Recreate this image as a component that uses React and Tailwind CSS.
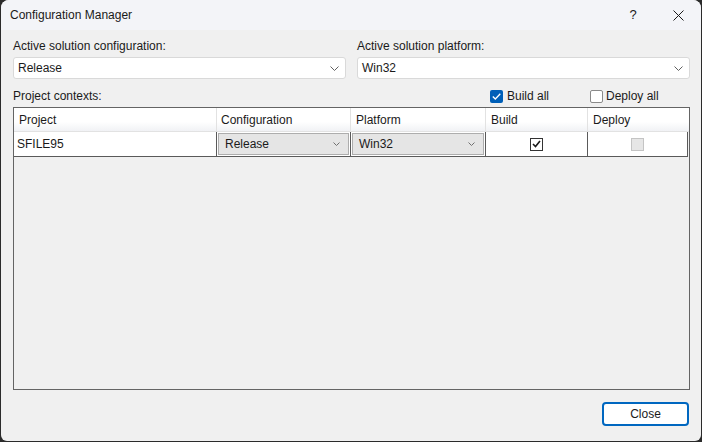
import React from "react";

const Chevron = ({ className = "" }) => (
  <svg width="9" height="5" viewBox="0 0 9 5" className={className} fill="none">
    <path d="M0.5 0.5 L4.5 4.5 L8.5 0.5" stroke="#606060" strokeWidth="1" />
  </svg>
);

const SmallChevron = () => (
  <svg width="7" height="4" viewBox="0 0 7 4" fill="none">
    <path d="M0.5 0.5 L3.5 3.5 L6.5 0.5" stroke="#707070" strokeWidth="1" />
  </svg>
);

function Combo({ value }) {
  return (
    <div className="h-[22px] bg-white border border-[#d9d9d9] rounded-[3px] flex items-center justify-between pl-[4px] pr-[6px]">
      <span>{value}</span>
      <Chevron />
    </div>
  );
}

function CellCombo({ value }) {
  return (
    <div className="h-[22px] mx-px bg-[#e5e5e5] border border-[#adadad] flex items-center justify-between pl-[6px] pr-[8px]">
      <span>{value}</span>
      <SmallChevron />
    </div>
  );
}

export default function App() {
  return (
    <div
      className="w-[702px] h-[442px] bg-[#2b2b2b] px-px pb-px text-[12px] text-[#1a1a1a]"
      style={{ fontFamily: '"Liberation Sans", Arial, sans-serif' }}
    >
      <div className="h-full bg-[#f0f0f0] rounded-t-[8px] rounded-b-[6px] flex flex-col overflow-hidden">
        {/* title bar */}
        <div className="h-[30px] bg-[#f3f4f8] flex items-center pl-[9px] shrink-0">
          <span className="flex-1">Configuration Manager</span>
          <span className="w-[14px] text-center mr-[33px] text-[13px]">?</span>
          <svg width="11" height="11" viewBox="0 0 11 11" className="mr-[17px]">
            <path d="M0.5 0.5 L10.5 10.5 M10.5 0.5 L0.5 10.5" stroke="#1a1a1a" strokeWidth="1" />
          </svg>
        </div>

        <div className="flex-1 flex flex-col pl-[12px] pr-[11px] pt-[8px] pb-[15px]">
          {/* solution config/platform */}
          <div className="grid grid-cols-2 gap-x-[11px]">
            <div className="flex flex-col gap-[3px]">
              <span className="leading-[16px]">Active solution configuration:</span>
              <Combo value="Release" />
            </div>
            <div className="flex flex-col gap-[3px]">
              <span className="leading-[16px]">Active solution platform:</span>
              <Combo value="Win32" />
            </div>
          </div>

          {/* project contexts row */}
          <div className="h-[28px] flex items-end pb-[3px]">
            <span className="flex-1 leading-[16px]">Project contexts:</span>
            <div className="flex items-center gap-[4px] w-[100px]">
              <div className="w-[13px] h-[13px] bg-[#005fb8] rounded-[2px] flex items-center justify-center">
                <svg width="9" height="7" viewBox="0 0 9 7" fill="none">
                  <path d="M0.8 3.5 L3.3 6 L8.3 0.8" stroke="white" strokeWidth="1.3" />
                </svg>
              </div>
              <span className="leading-[16px]">Build all</span>
            </div>
            <div className="flex items-center gap-[3px] w-[100px]">
              <div className="w-[13px] h-[13px] bg-white border border-[#8a8a8a] rounded-[2px]" />
              <span className="leading-[16px]">Deploy all</span>
            </div>
          </div>

          {/* grid */}
          <div className="h-[283px] border border-[#646464] bg-[#f0f0f0] flex flex-col">
            <div className="h-[24px] flex border-b border-[#e2e2e2] bg-gradient-to-b from-white from-60% to-[#f1f2f5]">
              <div className="w-[203px] border-r border-[#e2e2e2] flex items-center pl-[5px] pt-px">Project</div>
              <div className="w-[134px] border-r border-[#e2e2e2] flex items-center pl-[4px] pt-px">Configuration</div>
              <div className="w-[135px] border-r border-[#e2e2e2] flex items-center pl-[5px] pt-px">Platform</div>
              <div className="w-[102px] border-r border-[#e2e2e2] flex items-center pl-[5px] pt-px">Build</div>
              <div className="flex-1 flex items-center pl-[5px] pt-px">Deploy</div>
            </div>
            <div className="h-[25px] w-[674px] flex bg-white border-b border-r border-[#5a5a5a]">
              <div className="w-[203px] border-r border-[#5a5a5a] flex items-center pl-[3px]">SFILE95</div>
              <div className="w-[134px] border-r border-[#5a5a5a] flex items-center">
                <div className="flex-1"><CellCombo value="Release" /></div>
              </div>
              <div className="w-[135px] border-r border-[#5a5a5a] flex items-center">
                <div className="flex-1"><CellCombo value="Win32" /></div>
              </div>
              <div className="w-[102px] border-r border-[#5a5a5a] flex items-center justify-center">
                <div className="w-[13px] h-[13px] border border-[#333333] bg-white flex items-center justify-center">
                  <svg width="9" height="8" viewBox="0 0 9 8" fill="none">
                    <path d="M1 4 L3.5 6.5 L8 1" stroke="#1a1a1a" strokeWidth="1.6" />
                  </svg>
                </div>
              </div>
              <div className="flex-1 flex items-center justify-center">
                <div className="w-[13px] h-[13px] border border-[#c4c4c4] bg-[#e6e6e6]" />
              </div>
            </div>
          </div>

          {/* footer */}
          <div className="flex-1 flex items-end justify-end">
            <button className="w-[87px] h-[24px] mr-px bg-white border-2 border-[#0067c0] rounded-[4px] text-[12px] text-[#1a1a1a]">
              Close
            </button>
          </div>
        </div>
      </div>
    </div>
  );
}
